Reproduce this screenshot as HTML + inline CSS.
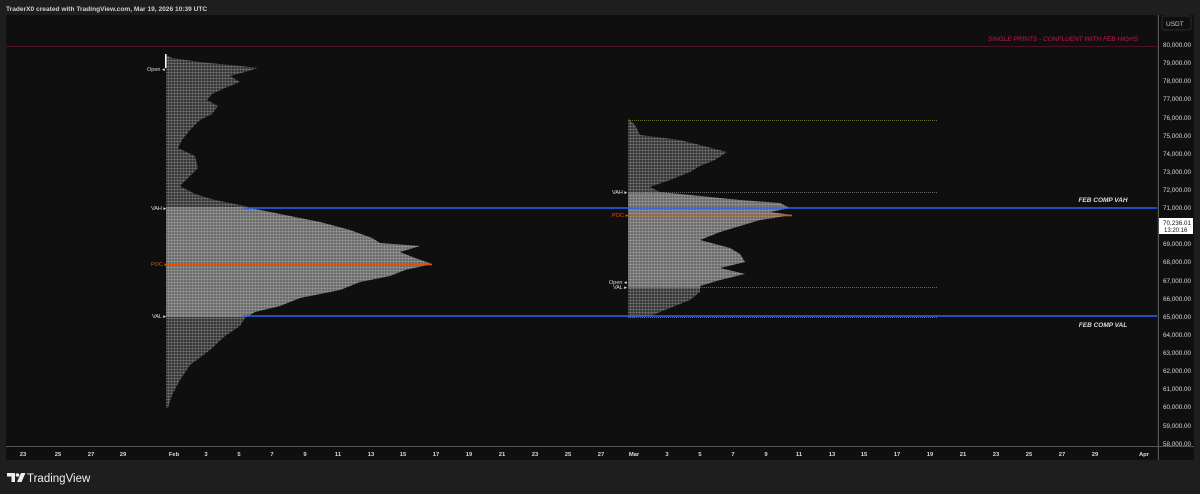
<!DOCTYPE html>
<html><head><meta charset="utf-8"><style>
html,body{margin:0;padding:0;background:#1e1e1e;width:1200px;height:494px;overflow:hidden;font-family:"Liberation Sans",sans-serif}
svg{position:absolute;left:0;top:0}
</style></head><body>
<svg width="1200" height="494" viewBox="0 0 1200 494" xmlns="http://www.w3.org/2000/svg">
<defs>
<pattern id="g" width="3" height="3" patternUnits="userSpaceOnUse">
<rect x="0" y="0" width="3" height="1" fill="#ffffff" fill-opacity="0.18"/>
<rect x="0" y="0" width="1" height="3" fill="#ffffff" fill-opacity="0.14"/>
</pattern>
<clipPath id="va1"><rect x="160" y="207" width="300" height="110"/></clipPath>
<clipPath id="va2"><rect x="620" y="192" width="200" height="96"/></clipPath>
</defs>
<text x="6" y="11" font-size="6.6" font-weight="bold" fill="#d0d0d0">TraderX0 created with TradingView.com, Mar 19, 2026 10:39 UTC</text>
<rect x="6" y="15" width="1151" height="431" fill="#0f0f0f"/>
<rect x="1159" y="15" width="35" height="445" fill="#0f0f0f"/>
<rect x="6" y="446" width="1151" height="14" fill="#0f0f0f"/>
<line x1="1158.5" y1="15" x2="1158.5" y2="460" stroke="#555" stroke-width="1"/>
<line x1="6" y1="446.5" x2="1194" y2="446.5" stroke="#555" stroke-width="1"/>
<rect x="1162" y="16" width="29" height="14" rx="2" fill="#0f0f0f" stroke="#2c2c2c"/>
<text x="1166" y="26" font-size="6.5" fill="#ccc">USDT</text>
<line x1="6" y1="46.5" x2="1157" y2="46.5" stroke="#4a1424" stroke-width="1"/>
<text x="1138" y="41" font-size="6.5" font-style="italic" fill="#c2185b" text-anchor="end">SINGLE PRINTS - CONFLUENT WITH FEB HIGHS</text>
<g>
<polygon fill="#383838" points="166,55 172,58 200,62 240,66 258,68 245,72 230,76 240,82 225,88 212,94 207,100 218,106 212,114 200,120 190,130 182,140 178,148 195,156 198,168 188,178 180,186 195,194 215,200 245,206 250,208 280,214 320,222 350,230 372,238 380,243 420,246 400,252 415,258 432,264 405,270 390,276 360,282 340,290 300,298 280,306 255,312 245,318 240,326 225,336 210,350 190,365 180,380 172,395 168,408 166,408"/>
<polygon fill="#6c6c6c" clip-path="url(#va1)" points="166,55 172,58 200,62 240,66 258,68 245,72 230,76 240,82 225,88 212,94 207,100 218,106 212,114 200,120 190,130 182,140 178,148 195,156 198,168 188,178 180,186 195,194 215,200 245,206 250,208 280,214 320,222 350,230 372,238 380,243 420,246 400,252 415,258 432,264 405,270 390,276 360,282 340,290 300,298 280,306 255,312 245,318 240,326 225,336 210,350 190,365 180,380 172,395 168,408 166,408"/>
<polygon fill="url(#g)" points="166,55 172,58 200,62 240,66 258,68 245,72 230,76 240,82 225,88 212,94 207,100 218,106 212,114 200,120 190,130 182,140 178,148 195,156 198,168 188,178 180,186 195,194 215,200 245,206 250,208 280,214 320,222 350,230 372,238 380,243 420,246 400,252 415,258 432,264 405,270 390,276 360,282 340,290 300,298 280,306 255,312 245,318 240,326 225,336 210,350 190,365 180,380 172,395 168,408 166,408"/>
<rect x="165" y="54" width="1.5" height="14" fill="#fff"/>
</g>
<g>
<polygon fill="#383838" points="628,118 635,125 640,135 680,140 700,145 727,152 715,160 700,166 690,172 670,180 650,187 660,192 700,196 740,200 780,203 790,208 770,212 792,215 760,220 740,226 720,232 700,240 730,248 740,254 745,262 720,268 745,274 720,280 700,286 700,292 690,300 670,308 650,316 628,318"/>
<polygon fill="#6c6c6c" clip-path="url(#va2)" points="628,118 635,125 640,135 680,140 700,145 727,152 715,160 700,166 690,172 670,180 650,187 660,192 700,196 740,200 780,203 790,208 770,212 792,215 760,220 740,226 720,232 700,240 730,248 740,254 745,262 720,268 745,274 720,280 700,286 700,292 690,300 670,308 650,316 628,318"/>
<polygon fill="url(#g)" points="628,118 635,125 640,135 680,140 700,145 727,152 715,160 700,166 690,172 670,180 650,187 660,192 700,196 740,200 780,203 790,208 770,212 792,215 760,220 740,226 720,232 700,240 730,248 740,254 745,262 720,268 745,274 720,280 700,286 700,292 690,300 670,308 650,316 628,318"/>
</g>
<line x1="628" y1="120.5" x2="938" y2="120.5" stroke="#6b6b2a" stroke-dasharray="1,1"/>
<line x1="628" y1="192.5" x2="938" y2="192.5" stroke="#666" stroke-dasharray="1,1"/>
<line x1="628" y1="287.5" x2="938" y2="287.5" stroke="#666" stroke-dasharray="1,1"/>
<line x1="628" y1="317.5" x2="938" y2="317.5" stroke="#6b6b2a" stroke-dasharray="1,1"/>
<line x1="166" y1="208" x2="243" y2="208" stroke="#888" stroke-dasharray="1,1"/>
<line x1="243" y1="208" x2="1157" y2="208" stroke="#2962ff" stroke-width="1.5"/>
<line x1="166" y1="316" x2="243" y2="316" stroke="#888" stroke-dasharray="1,1"/>
<line x1="243" y1="316" x2="1157" y2="316" stroke="#2962ff" stroke-width="1.5"/>
<line x1="166" y1="264.5" x2="432" y2="264.5" stroke="#e65100" stroke-width="1.5"/>
<line x1="628" y1="215.5" x2="792" y2="215.5" stroke="#e65100" stroke-width="1.5"/>
<g font-size="5.5" fill="#ddd">
<text x="147" y="71">Open ◂</text>
<text x="151" y="210">VAH ▸</text>
<text x="151" y="266" fill="#e65100">POC ▸</text>
<text x="152" y="318">VAL ▸</text>
<text x="612" y="194">VAH ▸</text>
<text x="612" y="217" fill="#e65100">POC ▸</text>
<text x="609" y="284">Open ◂</text>
<text x="613" y="289">VAL ▸</text>
</g>
<g font-size="6.5" font-style="italic" font-weight="bold" fill="#ddd" text-anchor="middle">
<text x="1103" y="202">FEB COMP VAH</text>
<text x="1103" y="327">FEB COMP VAL</text>
</g>
<g font-size="6.3" fill="#d8d8d8">
<text x="1163" y="47">80,000.00</text><text x="1163" y="65">79,000.00</text><text x="1163" y="83">78,000.00</text><text x="1163" y="101">77,000.00</text><text x="1163" y="120">76,000.00</text><text x="1163" y="138">75,000.00</text><text x="1163" y="156">74,000.00</text><text x="1163" y="174">73,000.00</text><text x="1163" y="192">72,000.00</text><text x="1163" y="210">71,000.00</text>
<text x="1163" y="246">69,000.00</text><text x="1163" y="264">68,000.00</text><text x="1163" y="283">67,000.00</text><text x="1163" y="301">66,000.00</text><text x="1163" y="319">65,000.00</text><text x="1163" y="337">64,000.00</text><text x="1163" y="355">63,000.00</text><text x="1163" y="373">62,000.00</text><text x="1163" y="391">61,000.00</text><text x="1163" y="409">60,000.00</text><text x="1163" y="428">59,000.00</text><text x="1163" y="446">58,000.00</text>
</g>
<rect x="1159" y="218" width="34" height="16" fill="#fff"/>
<text x="1163" y="225" font-size="6.3" fill="#111">70,236.01</text>
<text x="1164" y="232" font-size="6" fill="#111">13:20:16</text>
<g font-size="5.8" fill="#ddd" text-anchor="middle" font-weight="bold">
<text x="23" y="456">23</text><text x="58" y="456">25</text><text x="91" y="456">27</text><text x="123" y="456">29</text><text x="174" y="456">Feb</text><text x="206" y="456">3</text><text x="239" y="456">5</text><text x="272" y="456">7</text><text x="305" y="456">9</text><text x="338" y="456">11</text><text x="371" y="456">13</text><text x="403" y="456">15</text><text x="436" y="456">17</text><text x="469" y="456">19</text><text x="502" y="456">21</text><text x="535" y="456">23</text><text x="568" y="456">25</text><text x="601" y="456">27</text><text x="634" y="456">Mar</text><text x="667" y="456">3</text><text x="700" y="456">5</text><text x="733" y="456">7</text><text x="766" y="456">9</text><text x="799" y="456">11</text><text x="832" y="456">13</text><text x="864" y="456">15</text><text x="897" y="456">17</text><text x="930" y="456">19</text><text x="963" y="456">21</text><text x="996" y="456">23</text><text x="1029" y="456">25</text><text x="1062" y="456">27</text><text x="1095" y="456">29</text><text x="1144" y="456">Apr</text>
</g>
<g fill="#eee">
<path d="M7 473 h8 v9 h-3.5 v-5.5 h-4.5z"/>
<circle cx="17.5" cy="475" r="1.8"/>
<path d="M21 473 h4.5 l-4 9 h-4.5z"/>
</g>
<text x="27" y="482" font-size="11.5" fill="#eee">TradingView</text>
</svg>
</body></html>
